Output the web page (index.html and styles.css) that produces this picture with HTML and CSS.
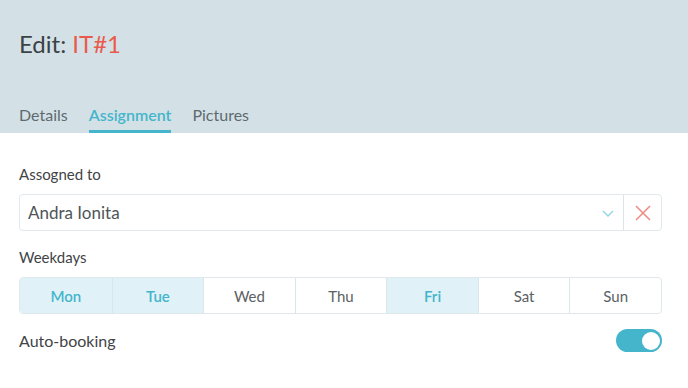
FILE: index.html
```html
<!DOCTYPE html>
<html lang="en">
<head>
    <meta charset="UTF-8">
    <meta name="viewport" content="width=device-width, initial-scale=1.0">
    <title>Edit: IT#1</title>
    <link rel="stylesheet" href="styles.css">
</head>
<body>

    <header class="header">
        <h1 class="title">Edit: <span class="title-id">IT#1</span></h1>
        <nav class="tabs">
            <a class="tab">Details</a>
            <a class="tab active">Assignment</a>
            <a class="tab">Pictures</a>
        </nav>
    </header>

    <main class="content">
        <label class="field-label">Assogned to</label>
        <div class="select">
            <div class="select-value">Andra Ionita</div>
            <div class="select-arrow">
                <svg width="12" height="7" viewBox="0 0 12 7"><path d="M1 1 L6 6 L11 1" fill="none" stroke="#8fd3e4" stroke-width="1.3"/></svg>
            </div>
            <div class="select-clear">
                <svg width="16" height="16" viewBox="0 0 16 16"><path d="M1 1 L15 15 M15 1 L1 15" fill="none" stroke="#f08a80" stroke-width="1.5"/></svg>
            </div>
        </div>

        <label class="field-label">Weekdays</label>
        <div class="weekdays">
            <div class="day selected">Mon</div>
            <div class="day selected">Tue</div>
            <div class="day">Wed</div>
            <div class="day">Thu</div>
            <div class="day selected">Fri</div>
            <div class="day">Sat</div>
            <div class="day">Sun</div>
        </div>

        <div class="toggle-row">
            <span class="toggle-label">Auto-booking</span>
            <div class="toggle on"><div class="knob"></div></div>
        </div>
    </main>

</body>
</html>
```

FILE: styles.css
```css
body {
    margin: 0;
    font-family: Lato, "Open Sans", sans-serif;
    background-color: #fff;
    color: #444;
}
.header {
    background-color: #d3e1e6;
    height: 133px;
    padding: 0 19px;
    box-sizing: border-box;
    display: flex;
    flex-direction: column;
}
.title {
    margin: 28px 0 0;
    font-size: 24px;
    font-weight: 400;
    color: #3b4346;
    line-height: 32px;
}
.title-id {
    color: #ea5a4c;
}
.tabs {
    display: flex;
    gap: 21px;
    margin-top: auto;
}
.tab {
    font-size: 16px;
    color: #5e6a6f;
    padding-bottom: 5px;
    border-bottom: 3px solid transparent;
    line-height: 20px;
}
.tab.active {
    color: #45b5cc;
    border-bottom-color: #45b5cc;
    font-weight: 600;
}
.content {
    padding: 32px 26px 0 19px;
}
.field-label {
    display: block;
    font-size: 15px;
    line-height: 18px;
    color: #3f4446;
    margin-bottom: 11px;
}
.select {
    display: flex;
    align-items: center;
    height: 37px;
    border: 1.5px solid #e1e9ec;
    border-radius: 4px;
    box-sizing: border-box;
    margin-bottom: 17px;
}
.select-value {
    flex: 1;
    padding-left: 8px;
    font-size: 17px;
    color: #4f5558;
}
.select-arrow {
    width: 30px;
    display: flex;
    align-items: center;
    justify-content: center;
    padding-top: 1px;
}
.select-clear {
    width: 37px;
    height: 100%;
    display: flex;
    align-items: center;
    justify-content: center;
    border-left: 1px solid #dbe5e9;
}
.weekdays {
    display: grid;
    grid-template-columns: repeat(7, 1fr);
    height: 37px;
    border: 1.5px solid #dfe9ed;
    border-radius: 4px;
    box-sizing: border-box;
    overflow: hidden;
    margin-bottom: 15px;
}
.day {
    display: flex;
    align-items: center;
    justify-content: center;
    font-size: 15px;
    color: #5b6164;
    border-left: 1px solid #dbe6ea;
}
.day:first-child {
    border-left: none;
}
.day.selected {
    background-color: #e0f2f8;
    color: #45b5cc;
    font-weight: 600;
}
.toggle-row {
    display: flex;
    align-items: center;
    justify-content: space-between;
}
.toggle-label {
    font-size: 16px;
    color: #3f4446;
}
.toggle {
    width: 46px;
    height: 23px;
    border-radius: 12px;
    background-color: #d5dde0;
    display: flex;
    align-items: center;
    padding: 0 2px;
    box-sizing: border-box;
}
.toggle.on {
    background-color: #45b5cc;
    justify-content: flex-end;
}
.knob {
    width: 18px;
    height: 18px;
    border-radius: 50%;
    background-color: #fff;
}
```
